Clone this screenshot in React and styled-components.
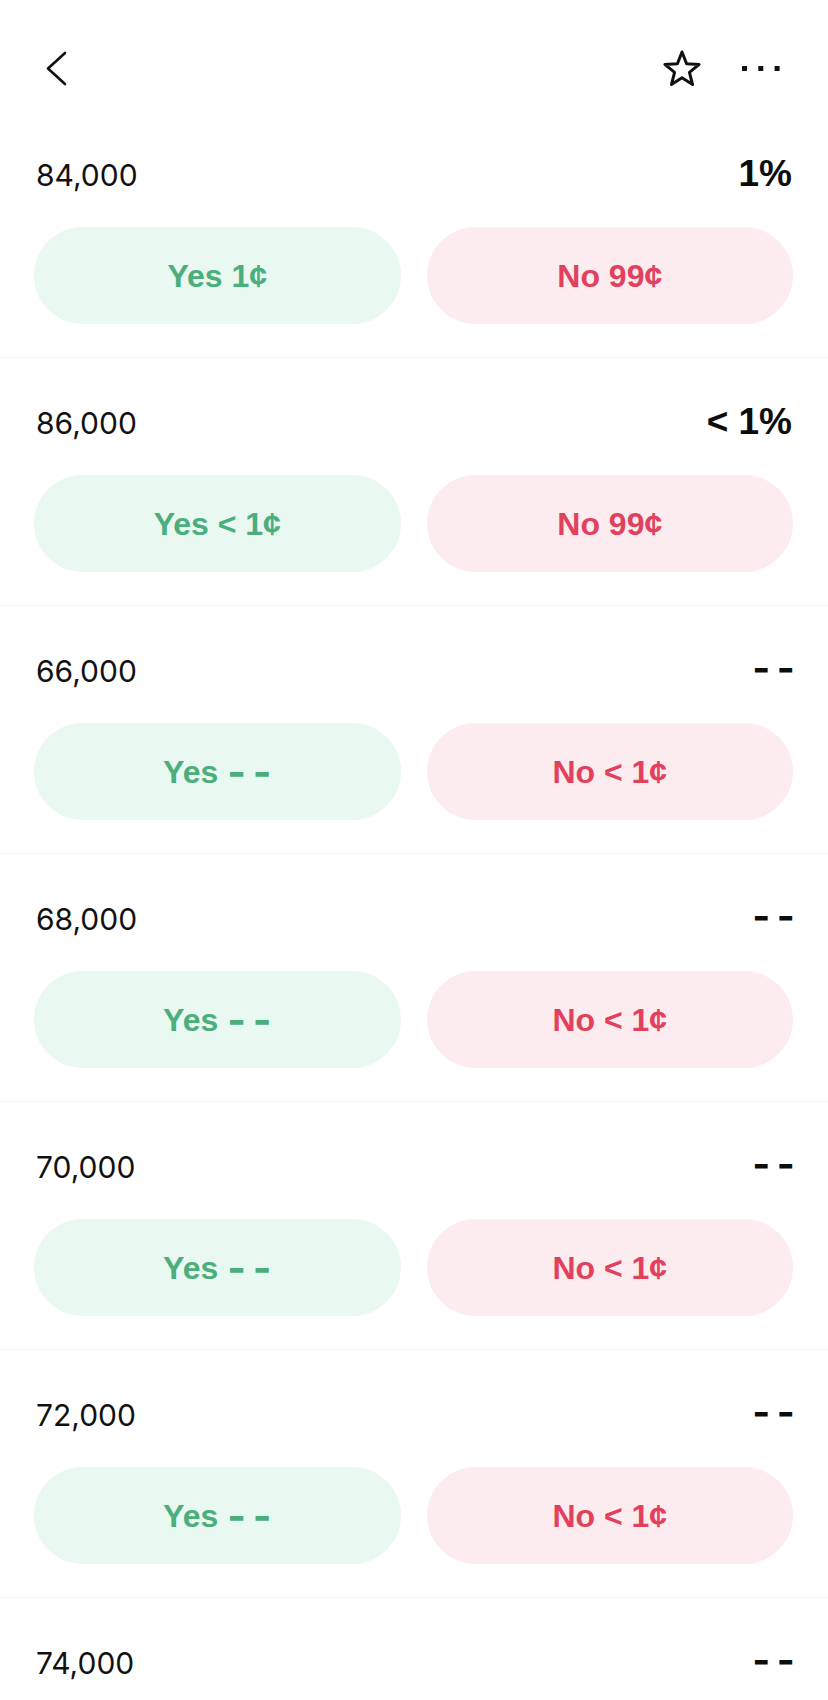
import React from "react";
import styled, { createGlobalStyle } from "styled-components";

const Global = createGlobalStyle`
  html, body { margin: 0; padding: 0; background: #ffffff; }
  body { font-family: Inter, "Liberation Sans", sans-serif; color: #111111; }
`;

const Page = styled.div`
  width: 828px;
  background: #ffffff;
`;

const Header = styled.header`
  height: 84px;
  padding: 26px 48px 0 46px;
  display: flex;
  align-items: center;
  justify-content: space-between;
`;

const Actions = styled.div`
  display: flex;
  align-items: center;
  gap: 41px;
`;

const IconSvg = styled.svg`
  display: block;
  overflow: visible;
`;

const List = styled.div`
  display: flex;
  flex-direction: column;
`;

const Row = styled.section`
  padding: 44px 35px 33px 34px;
  border-bottom: 1px solid #f4f4f4;
`;

const RowHead = styled.div`
  display: flex;
  align-items: baseline;
  justify-content: space-between;
  height: 40px;
`;

const Strike = styled.span`
  font-family: Inter, "Liberation Sans", sans-serif;
  font-size: 30px;
  line-height: 40px;
  font-weight: 400;
  color: #111111;
  padding-left: 2px;
`;

const Chance = styled.span`
  font-family: "Liberation Sans", Arial, sans-serif;
  font-size: 37px;
  line-height: 40px;
  font-weight: 700;
  color: #0d0d0d;
  padding-right: 1px;
  white-space: nowrap;
`;

const Dashes = styled.span`
  font-family: Inter, "Liberation Sans", sans-serif;
  font-weight: 700;
  font-size: ${(p) => (p.$big ? "1.04em" : "1.25em")};
  line-height: 0;
  white-space: nowrap;
  letter-spacing: 0.17em;
  margin-right: ${(p) => (p.$big ? "-0.24em" : "-0.17em")};
`;

const Buttons = styled.div`
  margin-top: 33px;
  display: grid;
  grid-template-columns: 1fr 1fr;
  gap: 26px;
`;

const Pill = styled.button`
  height: 97px;
  border: none;
  border-radius: 49px;
  background: ${(p) => (p.$side === "yes" ? "#e9f8f1" : "#fdecef")};
  color: ${(p) => (p.$side === "yes" ? "#4aae7d" : "#e2415e")};
  font-family: "Liberation Sans", Arial, sans-serif;
  font-size: 32px;
  font-weight: 700;
  line-height: 40px;
  display: flex;
  align-items: center;
  justify-content: center;
  padding: 0;
  white-space: pre;
  cursor: pointer;
`;

const BackIcon = () => (
  <IconSvg width="21" height="35" viewBox="0 0 21 35">
    <polyline
      points="19,2 2,17.5 19,33"
      fill="none"
      stroke="#111"
      strokeWidth="2.6"
      strokeLinecap="round"
      strokeLinejoin="round"
    />
  </IconSvg>
);

const starPoints = (() => {
  const cx = 19, cy = 20, R = 18, r = 7.8;
  const pts = [];
  for (let i = 0; i < 10; i++) {
    const rad = i % 2 === 0 ? R : r;
    const a = (-90 + i * 36) * (Math.PI / 180);
    pts.push(`${(cx + rad * Math.cos(a)).toFixed(2)},${(cy + rad * Math.sin(a)).toFixed(2)}`);
  }
  return pts.join(" ");
})();

const StarIcon = () => (
  <IconSvg width="38" height="36" viewBox="0 0 38 36">
    <polygon
      points={starPoints}
      fill="none"
      stroke="#111"
      strokeWidth="3"
      strokeLinejoin="round"
    />
  </IconSvg>
);

const MoreIcon = () => (
  <IconSvg width="38" height="5" viewBox="0 0 38 5">
    <rect x="0" y="0" width="5" height="5" fill="#111" />
    <rect x="16.3" y="0" width="5" height="5" fill="#111" />
    <rect x="32.6" y="0" width="5" height="5" fill="#111" />
  </IconSvg>
);

const renderValue = (text, big) =>
  text === "--" ? <Dashes $big={big}>--</Dashes> : text;

const rows = [
  { strike: "84,000", chance: "1%", yes: "1¢", no: "99¢" },
  { strike: "86,000", chance: "< 1%", yes: "< 1¢", no: "99¢" },
  { strike: "66,000", chance: "--", yes: "--", no: "< 1¢" },
  { strike: "68,000", chance: "--", yes: "--", no: "< 1¢" },
  { strike: "70,000", chance: "--", yes: "--", no: "< 1¢" },
  { strike: "72,000", chance: "--", yes: "--", no: "< 1¢" },
  { strike: "74,000", chance: "--", yes: "--", no: "< 1¢" },
];

export default function App() {
  return (
    <Page>
      <Global />
      <Header>
        <BackIcon />
        <Actions>
          <StarIcon />
          <MoreIcon />
        </Actions>
      </Header>
      <List>
        {rows.map((r) => (
          <Row key={r.strike}>
            <RowHead>
              <Strike>{r.strike}</Strike>
              <Chance>{renderValue(r.chance, true)}</Chance>
            </RowHead>
            <Buttons>
              <Pill $side="yes">Yes {renderValue(r.yes, false)}</Pill>
              <Pill $side="no">No {renderValue(r.no, false)}</Pill>
            </Buttons>
          </Row>
        ))}
      </List>
    </Page>
  );
}
